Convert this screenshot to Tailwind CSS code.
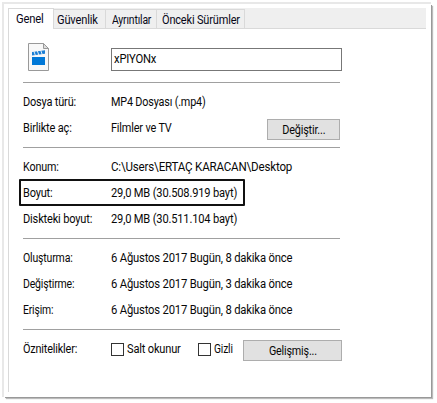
<!DOCTYPE html>
<html lang="tr">
<head>
<meta charset="utf-8">
<title>Özellikler</title>
<script src="https://cdn.jsdelivr.net/npm/@tailwindcss/browser@4"></script>
</head>
<body class="w-[437px] h-[403px] overflow-hidden bg-white pt-1 pl-1 font-['Roboto','Liberation_Sans',sans-serif] text-[12.5px] leading-[26px] tracking-[-0.2px] text-[#080808] whitespace-nowrap">
<main class="w-[427px] h-[393px] bg-white pt-1 pl-1 shadow-[1px_1px_0_0_#999,2px_2px_1px_0_#bbb,-1px_-1px_0_1px_#e8e8e8]">
  <nav class="flex items-end w-[418px] h-[21px] bg-[#efefef] border-b border-[#d9d9d9] text-[#080818]">
    <div class="relative z-10 w-[46px] h-[21px] -mb-px pl-[7px] bg-white border-l border-t border-r border-[#d9d9d9] leading-[19px]"><span class="inline-block origin-left scale-x-[0.9]">Genel</span></div>
    <div class="w-[51px] h-[19px] pl-[3px] border-t border-[#d9d9d9] leading-[19px]"><span class="inline-block origin-left scale-x-[0.89]">Güvenlik</span></div>
    <div class="w-[51px] h-[19px] pl-[6px] border-l border-t border-[#d9d9d9] leading-[19px]"><span class="inline-block origin-left scale-x-[0.83]">Ayrıntılar</span></div>
    <div class="w-[89px] h-[19px] pl-[5px] border-x border-t border-[#d9d9d9] leading-[19px]"><span class="inline-block origin-left scale-x-[0.88]">Önceki Sürümler</span></div>
  </nav>
  <section class="h-[363px] border-l border-[#d9d9d9] pl-[14px]">
    <header class="flex h-[53px] pt-[14px]">
      <svg class="w-[21px] h-[28px] ml-[5px] shrink-0" viewBox="0 0 21 28">
        <path d="M.5.5H15.5L20.5 5.5V27.5H.5Z" fill="#f8f8f8" stroke="#999"/>
        <path d="M15.5.5V5.5H20.5Z" fill="#ddd" stroke="#999"/>
        <path d="M4 14H17V22H4Z" fill="#0078d7"/>
        <path d="M4 9L17 7.3V10.8L4 12.5Z" fill="#1a7fd6"/>
        <path d="M5.8 8L7.6 13M9.2 7.5L11 12.5M12.6 7L14.4 12" stroke="#f8f8f8" stroke-width=".9"/>
      </svg>
      <div class="w-[231px] h-[23px] ml-[62px] mt-[5px] pl-[2px] border border-[#777] leading-[19px]"><span class="inline-block origin-left scale-x-[0.9]">xPIYONx</span></div>
    </header>
    <hr class="w-[317px] border-[#a0a0a0] mb-[6px]">
    <dl class="grid grid-cols-[88px_156px_73px] auto-rows-[26px]">
      <dt><span class="inline-block origin-left scale-x-[0.877]">Dosya türü:</span></dt><dd class="col-span-2"><span class="inline-block origin-left scale-x-[0.865]">MP4 Dosyası (.mp4)</span></dd>
      <dt><span class="inline-block origin-left scale-x-[0.88]">Birlikte aç:</span></dt><dd><span class="inline-block origin-left scale-x-[0.875]">Filmler ve TV</span></dd>
      <dd class="pt-[4px]"><button class="block w-[73px] h-[21px] bg-[#e1e1e1] border border-[#adadad] leading-[20px]"><span class="inline-block scale-x-[0.87]">Değiştir...</span></button></dd>
    </dl>
    <hr class="w-[317px] border-[#a0a0a0] my-[6px]">
    <dl class="relative grid grid-cols-[88px_229px] auto-rows-[26px]">
      <dt><span class="inline-block origin-left scale-x-[0.86]">Konum:</span></dt><dd><span class="inline-block origin-left scale-x-[0.925]">C:\Users\ERTAÇ KARACAN\Desktop</span></dd>
      <dt><span class="inline-block origin-left scale-x-[0.88]">Boyut:</span></dt><dd><span class="inline-block origin-left scale-x-[0.89]">29,0 MB (30.508.919 bayt)</span></dd>
      <dt><span class="inline-block origin-left scale-x-[0.885]">Diskteki boyut:</span></dt><dd><span class="inline-block origin-left scale-x-[0.89]">29,0 MB (30.511.104 bayt)</span></dd>
      <div class="absolute left-[-4px] top-[25px] w-[226px] h-[27px] border-2 border-[#111] rounded-[1px]"></div>
    </dl>
    <hr class="w-[317px] border-[#a0a0a0] my-[6px]">
    <dl class="grid grid-cols-[88px_229px] auto-rows-[26px]">
      <dt><span class="inline-block origin-left scale-x-[0.84]">Oluşturma:</span></dt><dd><span class="inline-block origin-left scale-x-[0.9]">6 Ağustos 2017 Bugün, 8 dakika önce</span></dd>
      <dt><span class="inline-block origin-left scale-x-[0.84]">Değiştirme:</span></dt><dd><span class="inline-block origin-left scale-x-[0.9]">6 Ağustos 2017 Bugün, 3 dakika önce</span></dd>
      <dt><span class="inline-block origin-left scale-x-[0.83]">Erişim:</span></dt><dd><span class="inline-block origin-left scale-x-[0.9]">6 Ağustos 2017 Bugün, 8 dakika önce</span></dd>
    </dl>
    <hr class="w-[317px] border-[#a0a0a0] my-[6px]">
    <div class="grid grid-cols-[88px_87px_45px_99px] h-[26px]">
      <div><span class="inline-block origin-left scale-x-[0.87]">Öznitelikler:</span></div>
      <label class="flex items-center gap-[3px]"><i class="w-[13px] h-[13px] border border-[#333] shrink-0"></i><span class="inline-block origin-left scale-x-[0.885]">Salt okunur</span></label>
      <label class="flex items-center gap-[3px]"><i class="w-[13px] h-[13px] border border-[#333] shrink-0"></i><span class="inline-block origin-left scale-x-[0.82]">Gizli</span></label>
      <div class="pt-[4px]"><button class="block w-[99px] h-[21px] bg-[#e1e1e1] border border-[#adadad] leading-[20px]"><span class="inline-block scale-x-[0.86]">Gelişmiş...</span></button></div>
    </div>
  </section>
</main>
</body>
</html>
